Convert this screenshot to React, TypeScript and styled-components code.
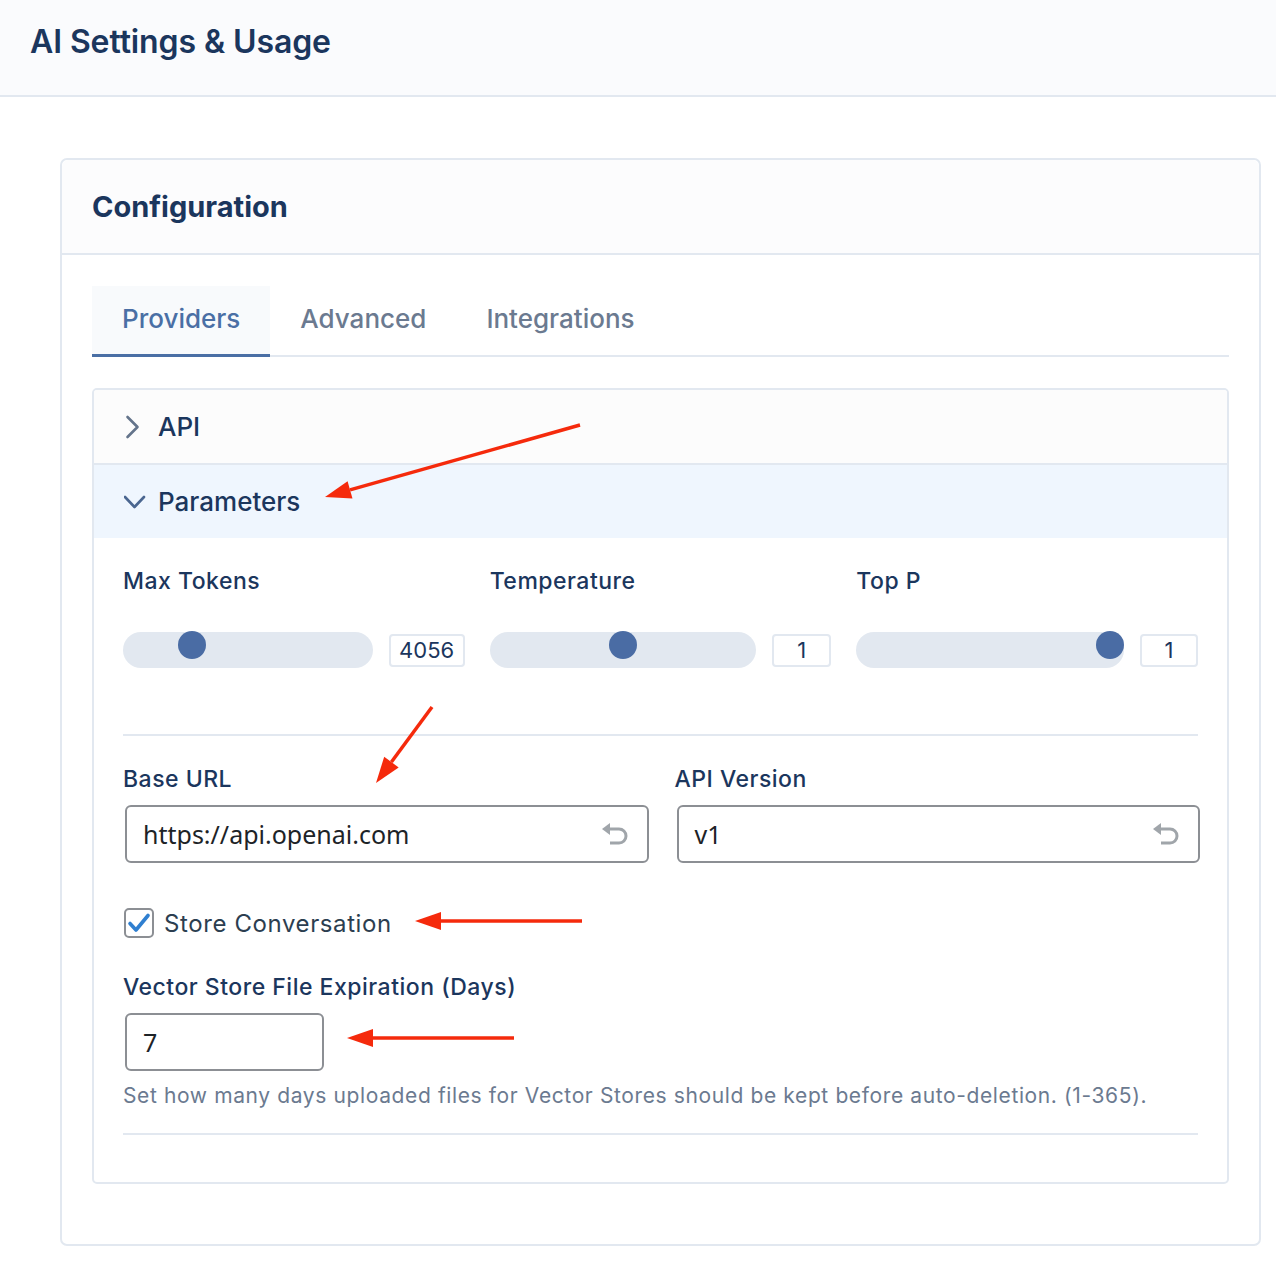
import styled, { createGlobalStyle } from "styled-components";

const GlobalStyle = createGlobalStyle`
  body {
    margin: 0;
    background: #ffffff;
    font-family: Inter, "Noto Sans", "Liberation Sans", sans-serif;
    color: #1b365d;
  }
`;

const Page = styled.div`
  position: relative;
  width: 1276px;
  min-height: 1262px;
`;

const TopBar = styled.header`
  height: 97px;
  box-sizing: border-box;
  display: flex;
  align-items: center;
  padding: 0 0 13px 30px;
  background: #fafbfd;
  border-bottom: 2px solid #e2e8f0;
`;

const PageTitle = styled.h1`
  margin: 0;
  font-size: 32px;
  font-weight: 600;
  color: #1b365d;
  letter-spacing: -0.1px;
`;

const Main = styled.main`
  padding: 61px 15px 16px 60px;
`;

const Card = styled.section`
  border: 2px solid #e2e8f0;
  border-radius: 7px;
  background: #fff;
`;

const CardHeader = styled.div`
  height: 93px;
  display: flex;
  align-items: center;
  padding-left: 30px;
  background: #fcfcfd;
  border-bottom: 2px solid #e2e8f0;
  border-radius: 7px 7px 0 0;
`;

const CardTitle = styled.h2`
  margin: 0;
  font-size: 29px;
  font-weight: 700;
  color: #1b365d;
`;

const CardBody = styled.div`
  padding: 31px 30px 60px 30px;
`;

const TabBar = styled.div`
  display: flex;
  border-bottom: 2px solid #e2e8f0;
`;

const Tab = styled.div<{ $active?: boolean }>`
  height: 68px;
  box-sizing: border-box;
  padding: 0 30px 3px 30px;
  display: flex;
  align-items: center;
  font-size: 26px;
  font-weight: 500;
  color: ${(p) => (p.$active ? "#4a6fa5" : "#6b7a90")};
  background: ${(p) => (p.$active ? "#f8fafc" : "transparent")};
  border-bottom: 3px solid ${(p) => (p.$active ? "#4a6fa5" : "transparent")};
  margin-bottom: -2px;
  height: 71px;
`;

const Accordion = styled.div`
  margin-top: 31px;
  border: 2px solid #e2e8f0;
  border-radius: 5px;
  overflow: hidden;
`;

const AccordionHeader = styled.div<{ $open?: boolean }>`
  height: 73px;
  display: flex;
  align-items: center;
  gap: 12px;
  padding-left: 30px;
  font-size: 26px;
  font-weight: 500;
  color: #1b365d;
  background: ${(p) => (p.$open ? "#eff6fe" : "#fcfcfc")};
  border-bottom: ${(p) => (p.$open ? "none" : "2px solid #e2e8f0")};
`;

const AccordionContent = styled.div`
  padding: 31px 29px 47px 29px;
`;

const SliderGrid = styled.div`
  display: grid;
  grid-template-columns: repeat(3, 1fr);
  gap: 25px;
  padding-bottom: 66px;
  border-bottom: 2px solid #e2e8f0;
`;

const FieldLabel = styled.div`
  font-size: 23px;
  font-weight: 500;
  letter-spacing: 0.5px;
  color: #1b365d;
  line-height: 24px;
`;

const SliderRow = styled.div`
  margin-top: 39px;
  display: flex;
  align-items: center;
  gap: 16px;
`;

const Track = styled.div`
  position: relative;
  flex: 1;
  height: 36px;
  border-radius: 18px;
  background: #e2e8f0;
`;

const Thumb = styled.div`
  position: absolute;
  top: -1px;
  width: 28px;
  height: 28px;
  border-radius: 50%;
  background: #4a6ca4;
`;

const NumberBox = styled.div<{ $w: number }>`
  width: ${(p) => p.$w}px;
  height: 33px;
  box-sizing: border-box;
  border: 2px solid #e2e8f0;
  border-radius: 4px;
  display: flex;
  align-items: center;
  justify-content: center;
  font-size: 22px;
  color: #1b365d;
`;

const UrlGrid = styled.div`
  display: grid;
  grid-template-columns: 1fr 1fr;
  gap: 26px;
  margin-top: 31px;
  margin-right: -2px;
`;

const InputBox = styled.div<{ $w?: number }>`
  margin-top: 14px;
  margin-left: 2px;
  width: ${(p) => (p.$w ? `${p.$w}px` : "auto")};
  height: 58px;
  box-sizing: border-box;
  border: 2px solid #8c8f94;
  border-radius: 6px;
  display: flex;
  align-items: center;
  justify-content: space-between;
  padding: 0 18px 0 16px;
  font-family: "Noto Sans", Inter, sans-serif;
  font-size: 25px;
  color: #1d2327;
`;

const CheckRow = styled.label`
  display: flex;
  align-items: center;
  gap: 10px;
  margin-top: 45px;
  font-size: 24px;
  letter-spacing: 0.6px;
  color: #2c3e50;
`;

const CheckBox = styled.span`
  width: 30px;
  height: 30px;
  box-sizing: border-box;
  border: 2px solid #8c8f94;
  border-radius: 5px;
  display: flex;
  align-items: center;
  justify-content: center;
  margin-left: 1px;
`;

const Section = styled.div`
  margin-top: 37px;
`;

const HelpText = styled.p`
  margin: 12px 0 0 0;
  font-size: 21px;
  letter-spacing: 0.62px;
  color: #6b7a90;
  padding-bottom: 25px;
  border-bottom: 2px solid #e2e8f0;
`;

const Annotations = styled.svg`
  position: absolute;
  inset: 0;
  pointer-events: none;
`;

const ChevronRight = () => (
  <svg width="22" height="24" viewBox="0 0 22 24" fill="none" stroke="#64748b" strokeWidth="2.6" strokeLinecap="round" strokeLinejoin="round">
    <path d="m3.5 2 10 10-10 10" />
  </svg>
);

const ChevronDown = () => (
  <svg width="22" height="22" viewBox="0 0 22 22" fill="none" stroke="#4a6690" strokeWidth="2.6" strokeLinecap="round" strokeLinejoin="round">
    <path d="m1 6 9.5 10 9.5-10" />
  </svg>
);

const ResetIcon = () => (
  <svg width="28" height="26" viewBox="0 0 28 26" fill="none">
    <path d="M1 8 L9 2 L9 14 Z" fill="#a0a5aa" />
    <path d="M8 8 H18 A7 7 0 0 1 18 22 H9" stroke="#a0a5aa" strokeWidth="3" fill="none" />
  </svg>
);

const Check = () => (
  <svg width="24" height="24" viewBox="0 0 24 24">
    <path d="M3 12.5 L9 19 L21 4.5" stroke="#2f7fd0" strokeWidth="3.6" fill="none" strokeLinecap="round" strokeLinejoin="round" />
  </svg>
);

type SliderProps = { label: string; value: string; ratio: number; boxWidth: number };

const Slider = ({ label, value, ratio, boxWidth }: SliderProps) => (
  <div>
    <FieldLabel>{label}</FieldLabel>
    <SliderRow>
      <Track>
        <Thumb style={{ left: `calc((100% - 28px) * ${ratio})` }} />
      </Track>
      <NumberBox $w={boxWidth}>{value}</NumberBox>
    </SliderRow>
  </div>
);

const Arrow = ({ x1, y1, x2, y2 }: { x1: number; y1: number; x2: number; y2: number }) => {
  const a = Math.atan2(y2 - y1, x2 - x1);
  const len = 26;
  const w = 9;
  const bx = x2 - Math.cos(a) * len;
  const by = y2 - Math.sin(a) * len;
  const px = -Math.sin(a) * w;
  const py = Math.cos(a) * w;
  return (
    <g>
      <line x1={x1} y1={y1} x2={bx} y2={by} stroke="#f52a0c" strokeWidth="3.5" />
      <polygon points={`${x2},${y2} ${bx + px},${by + py} ${bx - px},${by - py}`} fill="#f52a0c" />
    </g>
  );
};

const App = () => {
  return (
    <Page>
      <GlobalStyle />
      <TopBar>
        <PageTitle>AI Settings &amp; Usage</PageTitle>
      </TopBar>
      <Main>
        <Card>
          <CardHeader>
            <CardTitle>Configuration</CardTitle>
          </CardHeader>
          <CardBody>
            <TabBar>
              <Tab $active>Providers</Tab>
              <Tab>Advanced</Tab>
              <Tab>Integrations</Tab>
            </TabBar>
            <Accordion>
              <AccordionHeader>
                <ChevronRight />
                API
              </AccordionHeader>
              <AccordionHeader $open>
                <ChevronDown />
                Parameters
              </AccordionHeader>
              <AccordionContent>
                <SliderGrid>
                  <Slider label="Max Tokens" value="4056" ratio={0.249} boxWidth={76} />
                  <Slider label="Temperature" value="1" ratio={0.5} boxWidth={59} />
                  <Slider label="Top P" value="1" ratio={1} boxWidth={58} />
                </SliderGrid>
                <UrlGrid>
                  <div>
                    <FieldLabel>Base URL</FieldLabel>
                    <InputBox>
                      https://api.openai.com
                      <ResetIcon />
                    </InputBox>
                  </div>
                  <div>
                    <FieldLabel>API Version</FieldLabel>
                    <InputBox>
                      v1
                      <ResetIcon />
                    </InputBox>
                  </div>
                </UrlGrid>
                <CheckRow>
                  <CheckBox>
                    <Check />
                  </CheckBox>
                  Store Conversation
                </CheckRow>
                <Section>
                  <FieldLabel>Vector Store File Expiration (Days)</FieldLabel>
                  <InputBox $w={199}>7</InputBox>
                  <HelpText>
                    Set how many days uploaded files for Vector Stores should be kept before auto-deletion. (1-365).
                  </HelpText>
                </Section>
              </AccordionContent>
            </Accordion>
          </CardBody>
        </Card>
      </Main>
      <Annotations width="1276" height="1262" viewBox="0 0 1276 1262">
        <Arrow x1={580} y1={425} x2={325} y2={497} />
        <Arrow x1={432} y1={707} x2={376} y2={783} />
        <Arrow x1={582} y1={921} x2={415} y2={921} />
        <Arrow x1={514} y1={1038} x2={347} y2={1038} />
      </Annotations>
    </Page>
  );
};

export default App;
